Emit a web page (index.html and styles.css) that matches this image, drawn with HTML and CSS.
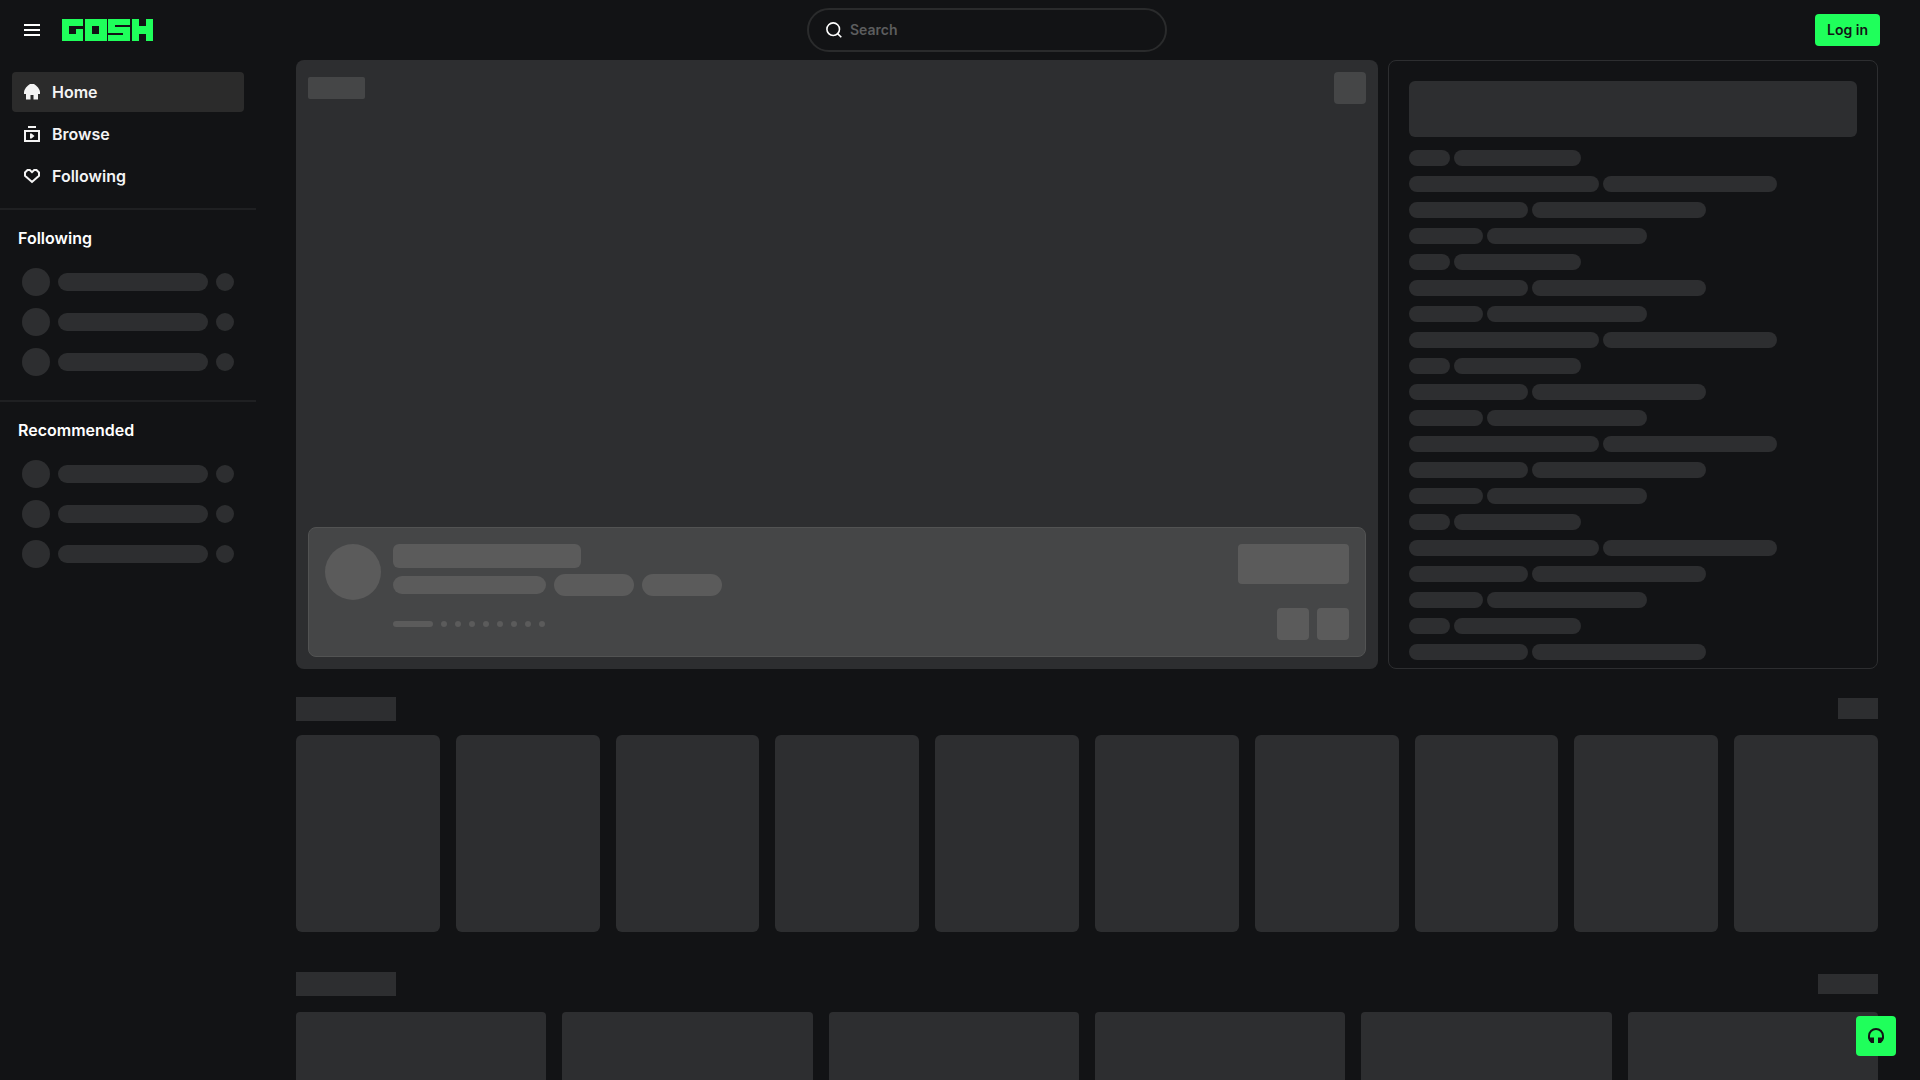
FILE: index.html
```html
<!DOCTYPE html>
<html lang="en">
<head>
    <meta charset="UTF-8">
    <meta name="viewport" content="width=device-width, initial-scale=1.0">
    <title>Gosh</title>
    <link rel="stylesheet" href="styles.css">
</head>
<body>
    <header class="header">
        <div class="header-left">
            <button type="button" class="icon-btn" aria-label="Toggle menu">
                <svg width="16" height="12" viewBox="0 0 16 12" fill="currentColor">
                    <rect width="16" height="2"/>
                    <rect y="5" width="16" height="2"/>
                    <rect y="10" width="16" height="2"/>
                </svg>
            </button>
            <a href="#" class="logo" aria-label="Gosh">
                <svg width="91" height="22" viewBox="0 0 91 22" shape-rendering="crispEdges">
                    <g fill="#1fff5b">
                        <rect width="21" height="22"/>
                        <rect x="23" width="22" height="22"/>
                        <rect x="46" width="22" height="22"/>
                        <rect x="70" width="21" height="22"/>
                    </g>
                    <g fill="#121315">
                        <rect x="7" y="7" width="7" height="8"/>
                        <rect x="14" y="7" width="7" height="3"/>
                        <rect x="30" y="7" width="7" height="8"/>
                        <rect x="53" y="6" width="15" height="2"/>
                        <rect x="46" y="14" width="15" height="2"/>
                        <rect x="77" width="7" height="7"/>
                        <rect x="77" y="15" width="7" height="7"/>
                    </g>
                </svg>
            </a>
        </div>
        <form class="search" role="search">
            <svg width="16" height="16" viewBox="0 0 16 16" fill="none" stroke="currentColor" stroke-width="1.6">
                <circle cx="7.2" cy="7.2" r="6.3"/>
                <path d="M11.6 11.6 15.3 15.3"/>
            </svg>
            <input type="search" placeholder="Search" aria-label="Search">
        </form>
        <div class="header-right">
            <button type="button" class="login-btn">Log in</button>
        </div>
    </header>

    <div class="layout">
        <aside class="sidebar">
            <nav class="nav">
                <a href="#" class="nav-item active">
                    <svg width="16" height="16" viewBox="0 0 16 16" fill="currentColor">
                        <path d="M6 0h4l2 1.500L14 3.500 15.500 6 16 8v2h-2v5.500H9.500V11h-3v4.500H2V10H0V8l.5-2L2 3.500 4 1.500z"/>
                    </svg>
                    Home
                </a>
                <a href="#" class="nav-item">
                    <svg width="16" height="16" viewBox="0 0 16 16" fill="currentColor">
                        <path d="M4 0h8v2H4z"/>
                        <path fill-rule="evenodd" d="M0 4h16v12H0zM2 6v8h12V6z"/>
                        <path d="M6 7.500v5h1.500L10.500 10 7.500 7.500z"/>
                    </svg>
                    Browse
                </a>
                <a href="#" class="nav-item">
                    <svg width="16" height="16" viewBox="0 0 16 16" fill="none" stroke="currentColor" stroke-width="2">
                        <path d="M3.500 2h2.300L8 4.200 10.200 2h2.300L15 4.500v3.200L8 14 1 7.700V4.500z"/>
                    </svg>
                    Following
                </a>
            </nav>
            <section class="channels">
                <h2>Following</h2>
                <div class="channel"><span class="avatar"></span><span class="name"></span><span class="count"></span></div>
                <div class="channel"><span class="avatar"></span><span class="name"></span><span class="count"></span></div>
                <div class="channel"><span class="avatar"></span><span class="name"></span><span class="count"></span></div>
            </section>
            <section class="channels">
                <h2>Recommended</h2>
                <div class="channel"><span class="avatar"></span><span class="name"></span><span class="count"></span></div>
                <div class="channel"><span class="avatar"></span><span class="name"></span><span class="count"></span></div>
                <div class="channel"><span class="avatar"></span><span class="name"></span><span class="count"></span></div>
            </section>
        </aside>

        <main class="main">
            <div class="hero">
                <div class="player">
                    <div class="player-top">
                        <span class="live-badge"></span>
                        <span class="square"></span>
                    </div>
                    <div class="stream-info">
                        <span class="stream-avatar"></span>
                        <div class="stream-text">
                            <span class="stream-title"></span>
                            <div class="tags">
                                <span class="category"></span>
                                <span class="tag"></span>
                                <span class="tag"></span>
                            </div>
                            <div class="dots">
                                <span class="dot current"></span>
                                <span class="dot"></span>
                                <span class="dot"></span>
                                <span class="dot"></span>
                                <span class="dot"></span>
                                <span class="dot"></span>
                                <span class="dot"></span>
                                <span class="dot"></span>
                                <span class="dot"></span>
                            </div>
                        </div>
                        <div class="stream-actions">
                            <span class="watch"></span>
                            <div class="arrows">
                                <span class="arrow"></span>
                                <span class="arrow"></span>
                            </div>
                        </div>
                    </div>
                </div>
                <div class="chat">
                    <div class="chat-inner">
                        <div class="chat-header"></div>
                        <div class="message xs"><span></span><span></span></div>
                        <div class="message lg"><span></span><span></span></div>
                        <div class="message md"><span></span><span></span></div>
                        <div class="message sm"><span></span><span></span></div>
                        <div class="message xs"><span></span><span></span></div>
                        <div class="message md"><span></span><span></span></div>
                        <div class="message sm"><span></span><span></span></div>
                        <div class="message lg"><span></span><span></span></div>
                        <div class="message xs"><span></span><span></span></div>
                        <div class="message md"><span></span><span></span></div>
                        <div class="message sm"><span></span><span></span></div>
                        <div class="message lg"><span></span><span></span></div>
                        <div class="message md"><span></span><span></span></div>
                        <div class="message sm"><span></span><span></span></div>
                        <div class="message xs"><span></span><span></span></div>
                        <div class="message lg"><span></span><span></span></div>
                        <div class="message md"><span></span><span></span></div>
                        <div class="message sm"><span></span><span></span></div>
                        <div class="message xs"><span></span><span></span></div>
                        <div class="message md"><span></span><span></span></div>
                    </div>
                </div>
            </div>

            <section class="row categories">
                <div class="row-header"><span class="row-title"></span><span class="row-link"></span></div>
                <div class="cards">
                    <div class="card"></div>
                    <div class="card"></div>
                    <div class="card"></div>
                    <div class="card"></div>
                    <div class="card"></div>
                    <div class="card"></div>
                    <div class="card"></div>
                    <div class="card"></div>
                    <div class="card"></div>
                    <div class="card"></div>
                </div>
            </section>

            <section class="row streams">
                <div class="row-header"><span class="row-title"></span><span class="row-link"></span></div>
                <div class="cards">
                    <div class="card"></div>
                    <div class="card"></div>
                    <div class="card"></div>
                    <div class="card"></div>
                    <div class="card"></div>
                    <div class="card"></div>
                </div>
            </section>
        </main>
    </div>

    <button type="button" class="support-btn" aria-label="Support">
        <svg width="16" height="16" viewBox="0 0 16 16">
            <path d="M2 12.500 1 10V8a7 7 0 0 1 14 0v2l-1 2.500" fill="none" stroke="currentColor" stroke-width="2"/>
            <path d="M1 9.500h5V15H3l-2-2.500zM15 9.500h-5V15h3l2-2.500z" fill="currentColor"/>
        </svg>
    </button>
</body>
</html>
```

FILE: styles.css
```css
* {
    box-sizing: border-box;
}

body {
    margin: 0;
    height: 100vh;
    overflow: hidden;
    background: #121315;
    color: #fff;
    font-family: Inter, sans-serif;
    font-size: 16px;
    font-weight: 600;
}

button {
    border: none;
    padding: 0;
    font: inherit;
    cursor: pointer;
}

/* Header */
.header {
    display: flex;
    align-items: center;
    justify-content: space-between;
    height: 60px;
    padding: 0 40px 0 16px;
}

.header-left {
    display: flex;
    align-items: center;
    gap: 14px;
    padding-right: 6px;
}

.icon-btn {
    display: flex;
    align-items: center;
    justify-content: center;
    width: 32px;
    height: 32px;
    background: none;
    color: #fff;
}

.logo {
    display: flex;
}

.search {
    display: flex;
    align-items: center;
    gap: 8px;
    width: 360px;
    height: 44px;
    padding: 0 17px;
    border: 2px solid #2a2b2c;
    border-radius: 22px;
}

.search input {
    flex: 1;
    min-width: 0;
    height: 18px;
    padding: 0 0 2px;
    border: none;
    outline: none;
    background: none;
    color: #fff;
    font: inherit;
    font-size: 14px;
}

.search input::placeholder {
    color: #5c5d5e;
    opacity: 1;
}

.login-btn {
    height: 32px;
    padding: 0 12px 2px;
    border-radius: 4px;
    background: #1fff5b;
    color: #121315;
    font-size: 14px;
}

/* Sidebar */
.layout {
    display: flex;
}

.sidebar {
    flex: none;
    width: 256px;
}

.nav {
    display: flex;
    flex-direction: column;
    gap: 2px;
    padding: 12px;
}

.nav-item {
    display: flex;
    align-items: center;
    gap: 12px;
    height: 40px;
    padding: 0 12px;
    border-radius: 4px;
    color: #f4f4f4;
    text-decoration: none;
}

.nav-item.active {
    background: #2b2b2b;
}

.channels {
    display: flex;
    flex-direction: column;
    gap: 12px;
    padding: 18px 18px 24px;
    border-top: 2px solid #1f2022;
}

.channels h2 {
    margin: 0 0 8px;
    font-size: 16px;
    font-weight: 600;
    line-height: 20px;
}

.channel {
    display: flex;
    align-items: center;
    gap: 8px;
    padding: 0 4px;
}

.channel span {
    border-radius: 14px;
    background: #2d2e30;
}

.avatar {
    width: 28px;
    height: 28px;
}

.name {
    flex: 1;
    height: 18px;
}

.count {
    width: 18px;
    height: 18px;
}

/* Main */
.main {
    flex: 1;
    min-width: 0;
    padding: 0 42px 0 40px;
}

.hero {
    display: grid;
    grid-template-columns: 1fr 490px;
    gap: 10px;
}

.player {
    display: flex;
    flex-direction: column;
    justify-content: space-between;
    aspect-ratio: 16 / 9;
    padding: 12px;
    border-radius: 8px;
    background: #2d2e30;
}

.player-top {
    display: flex;
    align-items: center;
    justify-content: space-between;
}

.live-badge {
    width: 57px;
    height: 22px;
    border-radius: 2px;
    background: #454647;
}

.square {
    width: 32px;
    height: 32px;
    border-radius: 4px;
    background: #454647;
}

.stream-info {
    display: flex;
    gap: 12px;
    height: 130px;
    padding: 16px;
    border: 1px solid #525353;
    border-radius: 8px;
    background: #454647;
}

.stream-info span {
    background: #5b5b5b;
}

.stream-avatar {
    width: 56px;
    height: 56px;
    border-radius: 50%;
}

.stream-text {
    display: flex;
    flex: 1;
    flex-direction: column;
}

.stream-title {
    width: 188px;
    height: 24px;
    border-radius: 6px;
}

.tags {
    display: flex;
    align-items: center;
    gap: 8px;
    margin-top: 6px;
}

.category {
    width: 153px;
    height: 18px;
    border-radius: 9px;
}

.tag {
    width: 80px;
    height: 22px;
    border-radius: 11px;
}

.dots {
    display: flex;
    gap: 8px;
    margin-top: 25px;
}

.dot {
    width: 6px;
    height: 6px;
    border-radius: 3px;
}

.dot.current {
    width: 40px;
}

.stream-actions {
    display: flex;
    flex-direction: column;
    align-items: flex-end;
    justify-content: space-between;
}

.watch {
    width: 111px;
    height: 40px;
    border-radius: 4px;
}

.arrows {
    display: flex;
    gap: 8px;
}

.arrow {
    width: 32px;
    height: 32px;
    border-radius: 4px;
}

/* Chat */
.chat {
    min-height: 0;
    overflow: hidden;
    border: 1px solid #2d2e30;
    border-radius: 8px;
    contain: size;
}

.chat-inner {
    display: flex;
    flex-direction: column;
    gap: 10px;
    padding: 20px;
}

.chat-header {
    height: 56px;
    margin-bottom: 3px;
    border-radius: 6px;
    background: #2d2e30;
}

.message {
    display: flex;
    gap: 4px;
}

.message span {
    height: 16px;
    border-radius: 8px;
    background: #2d2e30;
}

.xs span:first-child {
    width: 41px;
}

.xs span:last-child {
    width: 127px;
}

.sm span:first-child {
    width: 74px;
}

.sm span:last-child {
    width: 160px;
}

.md span:first-child {
    width: 119px;
}

.md span:last-child {
    width: 174px;
}

.lg span:first-child {
    width: 190px;
}

.lg span:last-child {
    width: 174px;
}

/* Card rows */
.row-header {
    display: flex;
    align-items: center;
    justify-content: space-between;
}

.row-title {
    width: 100px;
    height: 24px;
    background: #2d2e30;
}

.row-link {
    width: 60px;
    height: 20px;
    background: #2d2e30;
}

.cards {
    display: grid;
    gap: 16px;
}

.card {
    background: #2d2e30;
}

.categories {
    margin-top: 28px;
}

.categories .row-link {
    width: 40px;
    height: 21px;
}

.categories .cards {
    grid-template-columns: repeat(10, 1fr);
    margin-top: 14px;
}

.categories .card {
    height: 197px;
    border-radius: 6px;
}

.streams {
    margin-top: 40px;
}

.streams .cards {
    grid-template-columns: repeat(6, 1fr);
    margin-top: 16px;
}

.streams .card {
    aspect-ratio: 16 / 9;
    border-radius: 4px;
}

.support-btn {
    position: fixed;
    right: 24px;
    bottom: 24px;
    display: flex;
    align-items: center;
    justify-content: center;
    width: 40px;
    height: 40px;
    border-radius: 4px;
    background: #1fff5b;
    color: #121315;
}
```
